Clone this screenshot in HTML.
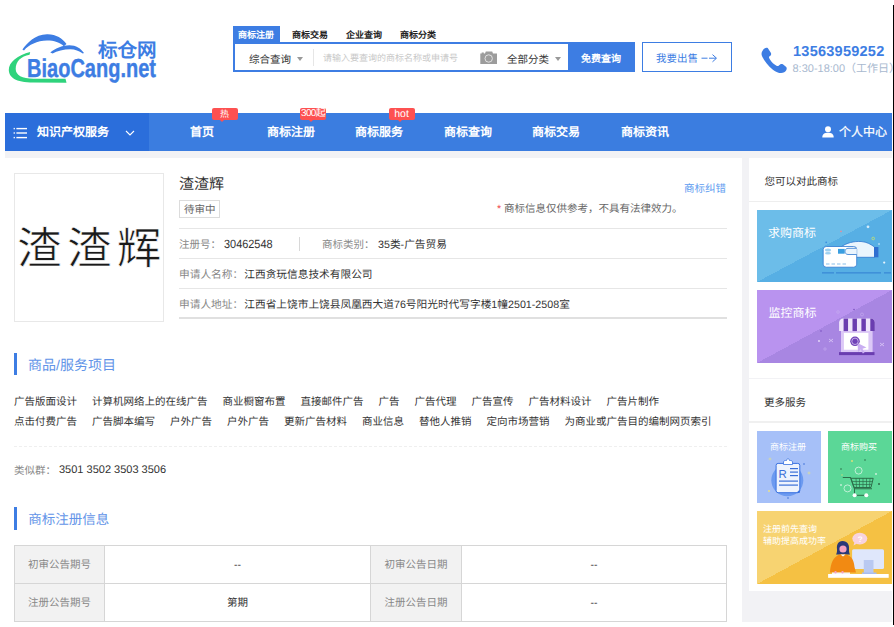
<!DOCTYPE html>
<html lang="zh-CN">
<head>
<meta charset="utf-8">
<style>
*{margin:0;padding:0;box-sizing:border-box}
html,body{width:894px;height:627px;overflow:hidden;background:#fff}
body{position:relative;font-family:"Liberation Sans",sans-serif;color:#333;text-rendering:geometricPrecision}
.a{position:absolute;white-space:nowrap}
.blk{position:absolute}
.gs span{margin-right:15px}
.dg{letter-spacing:0}
.tb td{border:1px solid #d6d6d6;text-align:center;font-size:10.5px;color:#333;padding:0}
.tb td.l{background:#f2f2f2;color:#888}
</style>
</head>
<body>
<!-- right black edge -->
<div class="blk" style="left:893px;top:5px;width:1px;height:620px;background:#000"></div>

<!-- ============ HEADER ============ -->
<svg class="blk" style="left:0;top:0" width="170" height="100" viewBox="0 0 170 100">
  <path d="M22.4,49.6 C27,43 35,34.6 47,34.3 C56,34.1 62.5,38.5 66.5,44 L63.8,46.3 C60,42.5 54,40.6 47,40.6 C37,40.6 29,45 24,50.4 Z" fill="#3d7de3"/>
  <path d="M50.3,52.4 C55,48.5 62,45.2 69.4,45.2 C76,45.2 81,48.5 84,53 L82.8,53.6 C79,51 75,49.3 70.5,49.3 C63.5,49.3 57,51.2 52.6,53.4 Z" fill="#3d7de3"/>
  <path d="M30.2,51.9 C18,55 8.5,62 8.8,70 C9,77 15,82.6 33.6,82.6 L66.5,82.8 L65.5,78.8 L33.6,78.8 C22,78.8 15.7,75 15.7,69 C15.7,61 21,56.5 29.6,54.7 Z" fill="#2fd37c"/>
</svg>
<div class="a" style="left:27px;top:52.5px;font-size:26px;line-height:30px;font-weight:bold;color:#3d7de3;-webkit-text-stroke:0.4px #3d7de3;transform:scaleX(0.77);transform-origin:0 0;letter-spacing:0">BiaoCang.net</div>
<div class="a" style="left:98px;top:39px;font-size:19.5px;line-height:24px;font-weight:bold;color:#3d7de3">标仓网</div>

<!-- search tabs -->
<div class="blk" style="left:233px;top:26px;width:47px;height:17px;background:#3d7de3"></div>
<div class="a" style="left:238px;top:28px;font-size:9px;line-height:14px;font-weight:bold;color:#fff">商标注册</div>
<div class="a" style="left:292px;top:28px;font-size:9px;line-height:14px;font-weight:bold;color:#222">商标交易</div>
<div class="a" style="left:346px;top:28px;font-size:9px;line-height:14px;font-weight:bold;color:#222">企业查询</div>
<div class="a" style="left:400px;top:28px;font-size:9px;line-height:14px;font-weight:bold;color:#222">商标分类</div>
<!-- search box -->
<div class="blk" style="left:233px;top:42.4px;width:336px;height:29.8px;border:2px solid #3d7de3;border-right:none;background:#fff"></div>
<div class="a" style="left:249px;top:53px;font-size:10.5px;line-height:14px;color:#333">综合查询</div>
<div class="blk" style="left:297px;top:57px;width:0;height:0;border-left:3.5px solid transparent;border-right:3.5px solid transparent;border-top:4px solid #999"></div>
<div class="blk" style="left:313px;top:49px;width:1px;height:17px;background:#e6e6e6"></div>
<div class="a" style="left:323px;top:52px;font-size:9px;line-height:12px;color:#c8c8c8">请输入要查询的商标名称或申请号</div>
<svg class="blk" style="left:480px;top:51px" width="18" height="14" viewBox="0 0 18 14">
  <path d="M0.3,2.4 L1.7,2.4 L1.7,1.5 L3.8,1.5 L3.8,2.4 L5,2.4 L5.8,0.4 L12.2,0.4 L13,2.4 L17,2.4 L17,12.9 L0.3,12.9 Z" fill="#9c9c9c"/>
  <circle cx="8.7" cy="7.5" r="3.7" fill="none" stroke="#e8e8e8" stroke-width="0.9"/>
</svg>
<div class="a" style="left:507px;top:53px;font-size:10.5px;line-height:14px;color:#333">全部分类</div>
<div class="blk" style="left:555px;top:57px;width:0;height:0;border-left:3.5px solid transparent;border-right:3.5px solid transparent;border-top:4px solid #999"></div>
<div class="blk" style="left:568px;top:42.4px;width:66.5px;height:29.8px;background:#3d7de3"></div>
<div class="a" style="left:581px;top:53px;font-size:10px;line-height:14px;font-weight:bold;color:#fff">免费查询</div>
<div class="blk" style="left:642px;top:42.4px;width:90px;height:29.8px;border:1.5px solid #3d7de3"></div>
<div class="a" style="left:656px;top:51.5px;font-size:10.5px;line-height:14px;color:#3d7de3">我要出售</div>
<svg class="blk" style="left:700px;top:52px" width="20" height="12" viewBox="0 0 20 12"><path d="M1.5,6.2 L7.5,6.2 M9,6.2 L16,6.2 M12.5,2.6 L16.5,6.2 L12.5,9.8" fill="none" stroke="#3d7de3" stroke-width="1"/></svg>
<!-- phone -->
<svg class="blk" style="left:759px;top:45.5px" width="28.8" height="28.8" viewBox="0 0 28 28">
  <path d="M3.5,4.5 C5,2 7,1.2 8.5,2 L11.5,6.5 C12.3,8 11.5,9.3 10,10.3 C9.5,10.7 9.6,11.5 10.5,13 C12.5,16 14.5,18 17,19.2 C18.2,19.8 18.8,19.5 19.3,19 C20.5,17.5 21.8,17 23.2,17.8 L26.5,20.5 C27.5,21.8 26.8,24 24.5,25.5 C22,27 18,26.5 13.5,23 C9,19.5 5,14.5 3,10 C2,7.5 2.5,5.8 3.5,4.5 Z" fill="#3d7de3"/>
</svg>
<div class="a" style="left:793px;top:43px;font-size:14.5px;line-height:18px;font-weight:bold;color:#3d7de3;letter-spacing:0.25px">13563959252</div>
<div class="a" style="left:792.5px;top:63px;font-size:11px;line-height:13px;color:#a9b9cf">8:30-18:00（工作日）</div>

<!-- ============ NAV ============ -->
<div class="blk" style="left:5px;top:113px;width:887px;height:38px;background:#3b7de0"></div>
<div class="blk" style="left:5px;top:113px;width:144px;height:38px;background:#2b6edb"></div>
<svg class="blk" style="left:13px;top:127px" width="14" height="12" viewBox="0 0 14 12">
  <rect x="0.6" y="0.9" width="1.3" height="1.4" fill="#fff"/><rect x="3.4" y="0.9" width="10.6" height="1.4" fill="#fff"/>
  <rect x="0.6" y="5.3" width="1.3" height="1.4" fill="#fff"/><rect x="3.4" y="5.3" width="10.6" height="1.4" fill="#fff"/>
  <rect x="0.6" y="9.9" width="1.3" height="1.4" fill="#fff"/><rect x="3.4" y="9.9" width="10.6" height="1.4" fill="#fff"/>
</svg>
<div class="a" style="left:37px;top:124px;font-size:12px;line-height:16px;font-weight:bold;color:#fff">知识产权服务</div>
<svg class="blk" style="left:125px;top:130px" width="10" height="7" viewBox="0 0 10 7"><path d="M1,1 L5,5 L9,1" fill="none" stroke="#fff" stroke-width="1.1"/></svg>

<div class="a" style="left:190px;top:124px;font-size:12px;line-height:16px;font-weight:bold;color:#fff">首页</div>
<div class="a" style="left:267px;top:124px;font-size:12px;line-height:16px;font-weight:bold;color:#fff">商标注册</div>
<div class="a" style="left:355px;top:124px;font-size:12px;line-height:16px;font-weight:bold;color:#fff">商标服务</div>
<div class="a" style="left:444px;top:124px;font-size:12px;line-height:16px;font-weight:bold;color:#fff">商标查询</div>
<div class="a" style="left:532px;top:124px;font-size:12px;line-height:16px;font-weight:bold;color:#fff">商标交易</div>
<div class="a" style="left:621px;top:124px;font-size:12px;line-height:16px;font-weight:bold;color:#fff">商标资讯</div>
<!-- badges -->
<div class="blk" style="left:211.5px;top:108.3px;width:26px;height:11.8px;background:#fd5151;border-radius:2px;color:#fff;font-size:9px;line-height:12px;text-align:center">热</div>
<div class="blk" style="left:219.9px;top:120px;width:0;height:0;border-left:2.5px solid transparent;border-right:2.5px solid transparent;border-top:2.2px solid #fd5151"></div>
<div class="blk" style="left:300px;top:108.3px;width:26px;height:11.8px;background:#fd5151;border-radius:2px;color:#fff;font-size:10px;line-height:12px;text-align:center;letter-spacing:-0.7px">300起</div>
<div class="blk" style="left:309px;top:120px;width:0;height:0;border-left:2.5px solid transparent;border-right:2.5px solid transparent;border-top:2.2px solid #fd5151"></div>
<div class="blk" style="left:388.6px;top:108.3px;width:26px;height:11.8px;background:#fd5151;border-radius:2px;color:#fff;font-size:10.5px;line-height:13px;text-align:center">hot</div>
<div class="blk" style="left:397.6px;top:120px;width:0;height:0;border-left:2.5px solid transparent;border-right:2.5px solid transparent;border-top:2.2px solid #fd5151"></div>

<svg class="blk" style="left:822px;top:126px" width="12" height="12" viewBox="0 0 12 12">
  <circle cx="6" cy="3.3" r="3" fill="#fff"/>
  <path d="M0.3,11.6 C0.3,8 2.5,6.8 6,6.8 C9.5,6.8 11.7,8 11.7,11.6 Z" fill="#fff"/>
</svg>
<div class="a" style="left:839px;top:124px;font-size:12px;line-height:16px;color:#fff;-webkit-text-stroke:0.25px #fff">个人中心</div>

<!-- page gray bg -->
<div class="blk" style="left:5px;top:151px;width:887px;height:471px;background:#f2f2f5"></div>
<!-- main panel -->
<div class="blk" style="left:5px;top:158px;width:737px;height:464px;background:#fff"></div>

<!-- trademark image -->
<div class="blk" style="left:14px;top:173px;width:150px;height:149px;border:1px solid #e8e8e8"></div>
<div class="a" style="left:17px;top:220px;font-size:44.5px;line-height:60px;color:#1a1a1a;letter-spacing:5.4px;-webkit-text-stroke:0.6px #fff;paint-order:fill stroke">渣渣辉</div>

<!-- detail -->
<div class="a" style="left:179px;top:175px;font-size:15px;line-height:19px;color:#333">渣渣辉</div>
<div class="blk" style="left:179px;top:200px;width:41px;height:17.5px;border:1px solid #dcdcdc"></div>
<div class="a" style="left:184px;top:204px;font-size:10.5px;line-height:13px;color:#666">待审中</div>
<div class="a" style="left:684px;top:183px;font-size:10.5px;line-height:13px;color:#5e9cf0">商标纠错</div>
<div class="a" style="left:497px;top:203px;font-size:10.5px;line-height:13px;color:#666"><span style="color:#f04b4f">*</span> 商标信息仅供参考，不具有法律效力。</div>
<div class="blk" style="left:179px;top:228px;width:548px;height:1px;background:#e6e6e6"></div>
<div class="blk" style="left:179px;top:258px;width:548px;height:1px;background:#e6e6e6"></div>
<div class="blk" style="left:179px;top:288px;width:548px;height:1px;background:#e6e6e6"></div>
<div class="blk" style="left:179px;top:317px;width:548px;height:2px;background:#e0e0e0"></div>
<div class="a" style="left:179px;top:239px;font-size:10.5px;line-height:13px;color:#888">注册号：</div>
<div class="a" style="left:224px;top:237px;font-size:12px;line-height:14px;color:#333;transform:scaleX(0.91);transform-origin:0 0">30462548</div>
<div class="blk" style="left:299px;top:237px;width:1px;height:14px;background:#d8d8d8"></div>
<div class="a" style="left:322px;top:239px;font-size:10.5px;line-height:13px;color:#888">商标类别：</div>
<div class="a" style="left:378px;top:239px;font-size:10.7px;line-height:13px;color:#333">35类-广告贸易</div>
<div class="a" style="left:179px;top:269px;font-size:10.7px;line-height:13px;color:#888">申请人名称：</div>
<div class="a" style="left:244.3px;top:269px;font-size:10.7px;line-height:13px;color:#333">江西贪玩信息技术有限公司</div>
<div class="a" style="left:179px;top:299px;font-size:10.7px;line-height:13px;color:#888">申请人地址：</div>
<div class="a" style="left:244.3px;top:299px;font-size:10.7px;line-height:13px;color:#333">江西省上饶市上饶县凤凰西大道<span class="dg">76</span>号阳光时代写字楼<span class="dg">1</span>幢<span class="dg">2501-2508</span>室</div>

<!-- goods/services -->
<div class="blk" style="left:14px;top:353px;width:3px;height:22px;background:#3d7de3"></div>
<div class="a" style="left:28px;top:356px;font-size:14px;line-height:18px;color:#6294e8">商品/服务项目</div>
<div class="a gs" style="left:14px;top:396px;font-size:10.5px;line-height:13px;color:#333"><span>广告版面设计</span><span>计算机网络上的在线广告</span><span>商业橱窗布置</span><span>直接邮件广告</span><span>广告</span><span>广告代理</span><span>广告宣传</span><span>广告材料设计</span><span>广告片制作</span></div>
<div class="a gs" style="left:14px;top:416px;font-size:10.5px;line-height:13px;color:#333"><span>点击付费广告</span><span>广告脚本编写</span><span>户外广告</span><span>户外广告</span><span>更新广告材料</span><span>商业信息</span><span>替他人推销</span><span>定向市场营销</span><span>为商业或广告目的编制网页索引</span></div>
<div class="blk" style="left:14px;top:446px;width:713px;height:0;border-top:1px dashed #efefef"></div>
<div class="a" style="left:14px;top:465px;font-size:10.5px;line-height:13px;color:#888">类似群：</div>
<div class="a" style="left:59px;top:463px;font-size:11px;line-height:14px;color:#333">3501 3502 3503 3506</div>

<!-- registration info -->
<div class="blk" style="left:14px;top:507px;width:3px;height:23px;background:#3d7de3"></div>
<div class="a" style="left:28.3px;top:510.5px;font-size:13.5px;line-height:18px;color:#6294e8">商标注册信息</div>
<table class="blk tb" style="left:14px;top:545px;width:713px;border-collapse:collapse">
<tr style="height:38px"><td class="l" style="width:90px">初审公告期号</td><td style="width:266px">--</td><td class="l" style="width:91px">初审公告日期</td><td>--</td></tr>
<tr style="height:38px"><td class="l">注册公告期号</td><td>第期</td><td class="l">注册公告日期</td><td>--</td></tr>
</table>

<!-- sidebar -->
<div class="blk" style="left:749px;top:158px;width:143px;height:220px;background:#fff"></div>
<div class="a" style="left:764.5px;top:175.5px;font-size:10.5px;line-height:13px;color:#333">您可以对此商标</div>
<div class="blk" style="left:749px;top:201px;width:143px;height:1px;background:#eee"></div>
<div class="blk card" style="left:757px;top:210px;width:135px;height:72px;background:linear-gradient(to bottom right,#6cbde9 50%,#57afe4 50%)"></div>
<svg class="blk" style="left:757px;top:210px" width="135" height="72" viewBox="0 0 135 72">
  <rect x="65" y="62.2" width="12" height="1.3" fill="#3a8ad6"/><rect x="79" y="62.2" width="45" height="1.3" fill="#3a8ad6"/><rect x="127" y="62.2" width="7" height="1.3" fill="#3a8ad6"/>
  <path d="M83,37.5 C90,32.5 97,31.2 104,31.5 C110,31.8 114,34.5 117.5,37 L117.5,47.3 L98,47.3 C94,47.3 91,46 88,44.5 Z" fill="#eaf5fd" stroke="#2f78d0" stroke-width="0.8"/>
  <rect x="117" y="37" width="4.4" height="10.3" fill="#2f6fd0"/>
  <rect x="66.2" y="36.5" width="33.5" height="20.7" rx="3" fill="#fff" stroke="#2f78d0" stroke-width="0.8"/>
  <path d="M99.7,38.3 L91,38.3 C89,38.3 88,40 88,41.5 C88,43 89,44.5 91,44.5 L99.7,44.5" fill="#eaf5fd" stroke="#2f78d0" stroke-width="0.8"/>
  <rect x="81" y="38.9" width="6.7" height="4.8" fill="#3a9ee0"/>
  <ellipse cx="71" cy="40" rx="3" ry="1.5" fill="#9fd0f0"/><ellipse cx="71" cy="43.3" rx="3" ry="1.3" fill="#9fd0f0"/>
  <rect x="69" y="53.5" width="3.5" height="1" fill="#8abfe9"/><rect x="74.5" y="53.5" width="3.5" height="1" fill="#8abfe9"/><rect x="80" y="53.5" width="3.5" height="1" fill="#8abfe9"/><rect x="85.5" y="53.5" width="3.5" height="1" fill="#8abfe9"/>
  <circle cx="111" cy="16.8" r="1.4" fill="#d6ecfa"/><circle cx="116.2" cy="28.5" r="1.3" fill="none" stroke="#c9e36a" stroke-width="0.8"/>
  <circle cx="84" cy="21.3" r="0.9" fill="#e98a9a"/><circle cx="127.2" cy="52.6" r="1.1" fill="#e6f3fc"/><circle cx="69.2" cy="32.3" r="0.9" fill="#3d8fe0"/><circle cx="122" cy="34" r="0.8" fill="#e6f3fc"/>
</svg>
<div class="a" style="left:768px;top:226px;font-size:12px;line-height:15px;color:#fff">求购商标</div>
<div class="blk card" style="left:757px;top:290px;width:135px;height:73px;background:linear-gradient(to bottom right,#b993ef 50%,#a886e2 50%)"></div>
<svg class="blk" style="left:757px;top:290.5px" width="135" height="73" viewBox="0 0 135 73">
  <rect x="84" y="39" width="31.6" height="22.7" fill="#dcc8f7"/>
  <rect x="86.9" y="41.9" width="24.5" height="16.8" fill="#fff"/>
  <path d="M82.1,40.1 L82.1,31.6 C82.1,29.4 83.9,27.6 86.1,27.6 L113.8,27.6 C116,27.6 117.8,29.4 117.8,31.6 L117.8,40.1 Z" fill="#efe6fb"/>
  <rect x="86.6" y="27.6" width="4.45" height="12.5" fill="#6a3db0"/><rect x="95.5" y="27.6" width="4.45" height="12.5" fill="#6a3db0"/><rect x="104.4" y="27.6" width="4.45" height="12.5" fill="#6a3db0"/>
  <path d="M113.3,27.6 L113.8,27.6 C116,27.6 117.8,29.4 117.8,31.6 L117.8,40.1 L113.3,40.1 Z" fill="#6a3db0"/>
  <rect x="82" y="61.1" width="35.5" height="3" fill="#6a3db0"/>
  <circle cx="98" cy="50.3" r="4.8" fill="#7042b8"/><circle cx="98" cy="50.3" r="3.2" fill="none" stroke="#e6d9fa" stroke-width="0.7"/>
  <path d="M100.5,52 L109.5,56.5 L105.5,57.8 L107.5,61.8 L105.8,62.6 L103.8,58.6 L101,61 Z" fill="#c9aef2"/>
  <path d="M72,48 l4,3 M76,48 l-4,3" stroke="#d7c3f5" stroke-width="0.9"/><path d="M123,52 l4,3 M127,52 l-4,3" stroke="#d7c3f5" stroke-width="0.9"/>
  <circle cx="81" cy="21" r="1.3" fill="none" stroke="#c7aef0" stroke-width="0.6"/><circle cx="105" cy="23.5" r="1.5" fill="none" stroke="#c7aef0" stroke-width="0.6"/>
  <circle cx="97" cy="18.5" r="0.8" fill="#7a50c0"/><circle cx="64" cy="40" r="0.8" fill="#7a50c0"/><circle cx="62" cy="50" r="0.9" fill="#e9defa"/><circle cx="68" cy="58" r="1.2" fill="none" stroke="#c7aef0" stroke-width="0.6"/>
</svg>
<div class="a" style="left:768.5px;top:305.5px;font-size:12px;line-height:15px;color:#fff">监控商标</div>

<div class="blk" style="left:749px;top:379px;width:143px;height:212px;background:#fff"></div>
<div class="a" style="left:764px;top:396.5px;font-size:10.5px;line-height:13px;color:#333">更多服务</div>
<div class="blk" style="left:749px;top:421px;width:143px;height:2px;background:#f0f0f0"></div>
<div class="blk" style="left:757px;top:431px;width:64px;height:72px;background:#a6c0f8"></div>
<svg class="blk" style="left:757px;top:431px" width="64" height="72" viewBox="0 0 64 72">
  <circle cx="30.3" cy="49.2" r="16" fill="#6c9af0"/>
  <rect x="19.1" y="32.4" width="23.7" height="29.3" rx="2" fill="#eef3fd" stroke="#3a72e0" stroke-width="1"/>
  <path d="M26.5,33.5 L26.5,31 C26.5,30 27.5,29.5 28.5,29.5 L29.5,29.5 C29.5,28.3 30.3,27.8 31,27.8 C31.7,27.8 32.5,28.3 32.5,29.5 L33.5,29.5 C34.5,29.5 35.5,30 35.5,31 L35.5,33.5 Z" fill="#fff" stroke="#3a72e0" stroke-width="0.8"/>
  <text x="21.5" y="47" font-family="Liberation Sans" font-size="11.5" fill="#3a6fd8">R</text>
  <rect x="33" y="37" width="8" height="1.2" fill="#3a6fd8"/><rect x="33" y="40.5" width="8" height="1.2" fill="#3a6fd8"/><rect x="33" y="44" width="8" height="1.2" fill="#3a6fd8"/>
  <rect x="22" y="49.5" width="19" height="1.2" fill="#3a6fd8"/><rect x="22" y="53.5" width="19" height="1.2" fill="#3a6fd8"/>
  <path d="M39.5,61.7 L42.8,58.4 L42.8,61.7 Z" fill="#3a72e0"/>
  <circle cx="13" cy="28" r="1" fill="none" stroke="#e6e08a" stroke-width="0.6"/><circle cx="47" cy="33" r="0.8" fill="#3a6fd8"/><circle cx="52" cy="42" r="1" fill="none" stroke="#e6e08a" stroke-width="0.6"/><circle cx="12" cy="60" r="1" fill="#e8e08a"/><circle cx="31" cy="67" r="0.8" fill="#3a6fd8"/>
</svg>
<div class="a" style="left:770px;top:441px;font-size:9px;line-height:12px;color:#fff">商标注册</div>
<div class="blk" style="left:828px;top:431px;width:64px;height:72px;background:#5bd797"></div>
<svg class="blk" style="left:828px;top:431px" width="64" height="72" viewBox="0 0 64 72">
  <path d="M14.8,46.5 L22.5,46.5 L26.5,57.8 L44,57.8" fill="none" stroke="#2d6f4a" stroke-width="1.1"/>
  <path d="M23,47.3 L45.2,47.3 L43,56.5 L26,56.5 Z" fill="none" stroke="#2d6f4a" stroke-width="1"/>
  <path d="M28,47.3 L28.5,56.5 M31.5,47.3 L31.5,56.5 M35,47.3 L35,56.5 M38.5,47.3 L38.5,56.5 M42,47.3 L41.5,56.5 M24.5,50.5 L44.5,50.5 M25.5,53.5 L43.7,53.5" stroke="#2d6f4a" stroke-width="0.7"/>
  <path d="M26.5,57.8 L26.5,64.3 L38.3,64.3" fill="none" stroke="#2d6f4a" stroke-width="1"/>
  <circle cx="26.6" cy="64.3" r="2" fill="#fff"/><circle cx="38.3" cy="64.3" r="2" fill="#fff"/>
  <circle cx="30.6" cy="39.6" r="3.5" fill="none" stroke="#d7f5e5" stroke-width="0.8"/><circle cx="19.5" cy="57.4" r="3.5" fill="none" stroke="#d7f5e5" stroke-width="0.8"/>
  <circle cx="24" cy="30" r="1" fill="#d9e07a"/><circle cx="37" cy="29" r="0.8" fill="#2d6f4a"/><circle cx="13" cy="38" r="0.8" fill="#2d6f4a"/><circle cx="48" cy="43" r="1" fill="#c8f0da"/><circle cx="14" cy="44" r="0.7" fill="#d9e07a"/><circle cx="51" cy="53" r="1" fill="#2d6f4a"/><circle cx="13" cy="54" r="0.9" fill="#c8f0da"/>
</svg>
<div class="a" style="left:841px;top:441px;font-size:9px;line-height:12px;color:#fff">商标购买</div>
<div class="blk" style="left:757px;top:511px;width:135px;height:72.7px;background:linear-gradient(to bottom right,#f7d371 50%,#f5c143 50%)"></div>
<svg class="blk" style="left:757px;top:511px" width="135" height="72.5" viewBox="0 0 135 72.5">
  <rect x="95.1" y="38.2" width="31.9" height="19.9" rx="1.5" fill="#dfe7fb"/>
  <rect x="106.8" y="49" width="9.7" height="13" fill="#b9c9f1"/>
  <rect x="105" y="61.5" width="14.5" height="1.5" fill="#a9bdee"/>
  <rect x="71.1" y="63" width="60.6" height="3.8" fill="#fff"/>
  <path d="M85.5,30 C81,30 79.5,34 80,38 C80.3,41 79.5,42.5 79,43.5 L93,43.5 C92.5,42.5 91.8,41 92,38 C92.5,34 90.5,30 85.5,30 Z" fill="#2b3a78"/>
  <path d="M73,61.5 C73.5,53 76,45.5 83,43.5 L89,43.5 C95,45 97,50 97.5,56 L99,61.5 Z" fill="#f28a12"/>
  <circle cx="86" cy="38" r="3.6" fill="#f4a3c2"/>
  <path d="M83.5,43.5 L86,45.5 L88.5,43.5 Z" fill="#fff"/>
  <rect x="75" y="61.5" width="18" height="1.5" fill="#f4f4f8"/>
  <circle cx="78.5" cy="61.3" r="1.2" fill="#f4a3c2"/><circle cx="85.5" cy="61.3" r="1.2" fill="#f4a3c2"/>
  <ellipse cx="102.8" cy="27.6" rx="7.5" ry="5.8" fill="#f8d3df"/>
  <path d="M97.5,31 L96.5,34.5 L100,32.5 Z" fill="#f8d3df"/>
  <text x="100.8" y="31" font-family="Liberation Sans" font-size="8" font-weight="bold" fill="#fff">?</text>
</svg>
<div class="a" style="left:763px;top:523px;font-size:9px;line-height:12px;color:#fff">注册前先查询</div>
<div class="a" style="left:763px;top:535px;font-size:9px;line-height:12px;color:#fff">辅助提高成功率</div>

</body>
</html>
